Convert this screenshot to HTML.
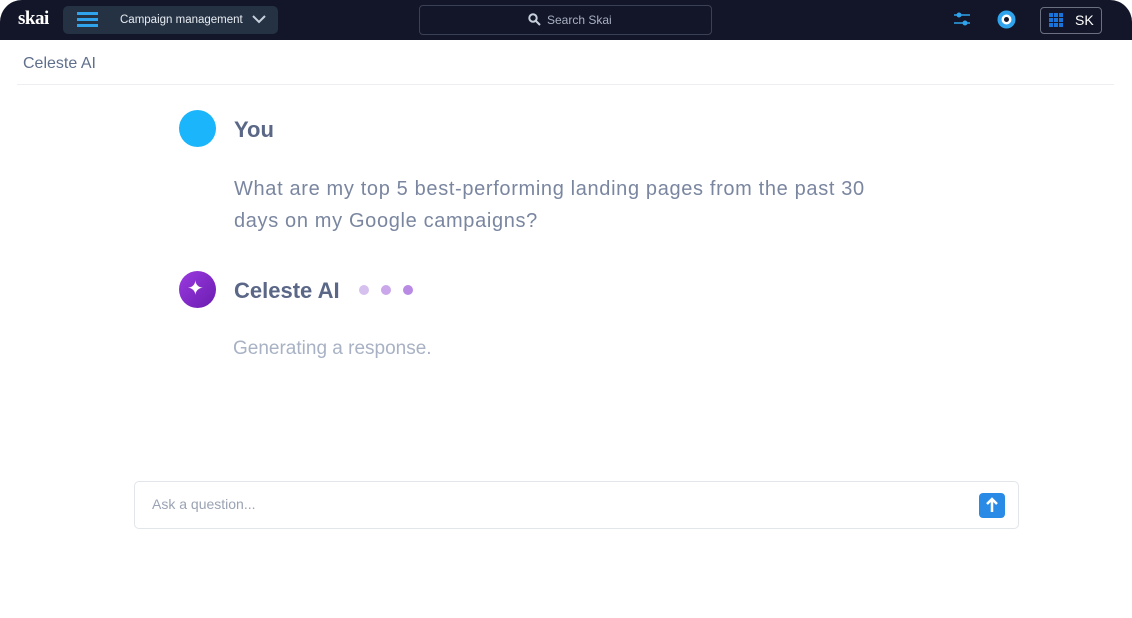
<!DOCTYPE html>
<html><head><meta charset="utf-8"><style>
body{margin:0;width:1132px;height:618px;background:#fff;font-family:"Liberation Sans",sans-serif;position:relative;overflow:hidden}
.top{position:absolute;left:0;top:0;width:1132px;height:40px;background:#131628;border-radius:22px 22px 0 0}
.abs{position:absolute}
</style></head><body>
<div class="top"></div>
<div class="abs" style="left:18px;top:8px;color:#fff;font-family:'Liberation Serif',serif;font-size:19px;font-weight:bold;letter-spacing:-0.5px">skai</div>
<div class="abs" style="left:63px;top:6px;width:215px;height:28px;background:#243243;border-radius:5px"></div>
<div class="abs" style="left:77px;top:12px;width:21px;height:3px;background:#2fa3ec;box-shadow:0 6px 0 #2fa3ec,0 12px 0 #2fa3ec"></div>
<div class="abs" style="left:120px;top:13px;color:#e8ecf2;font-size:11.5px;line-height:14px">Campaign management</div>
<svg class="abs" style="left:251px;top:13px" width="16" height="12"><path d="M2 3l6 6 6-6" stroke="#c8d0dc" stroke-width="2" fill="none"/></svg>
<div class="abs" style="left:419px;top:5px;width:291px;height:28px;border:1px solid #3a4156;border-radius:4px"></div>
<svg class="abs" style="left:528px;top:13px" width="13" height="13"><circle cx="5" cy="5" r="3.7" stroke="#c8d0dc" stroke-width="2" fill="none"/><path d="M8 8l4 4" stroke="#c8d0dc" stroke-width="2"/></svg>
<div class="abs" style="left:547px;top:13px;color:#a8b0c0;font-size:12px">Search Skai</div>
<svg class="abs" style="left:952px;top:11px" width="20" height="16"><path d="M2 4h16M2 12h16" stroke="#2fa3ec" stroke-width="1.5"/><circle cx="7" cy="4" r="2.5" fill="#2fa3ec"/><circle cx="13" cy="12" r="2.5" fill="#2fa3ec"/></svg>
<svg class="abs" style="left:997px;top:10px" width="19" height="19"><circle cx="9.5" cy="9.5" r="7" stroke="#2fa3ec" stroke-width="4" fill="#fff"/><circle cx="9.5" cy="9.5" r="2.5" fill="#131628"/></svg>
<div class="abs" style="left:1040px;top:7px;width:60px;height:25px;border:1px solid #6a7080;border-radius:4px"></div>
<div class="abs" style="left:1049px;top:13px;width:14px;height:14px;background:repeating-linear-gradient(90deg,#1a73d8 0 4px,transparent 4px 5px);-webkit-mask:repeating-linear-gradient(0deg,#000 0 4px,transparent 4px 5px)"></div>
<div class="abs" style="left:1075px;top:12px;color:#fff;font-size:14px">SK</div>
<div class="abs" style="left:23px;top:55px;color:#5f6f8c;font-size:16px">Celeste AI</div>
<div class="abs" style="left:17px;top:84px;width:1097px;height:1px;background:#eceef2"></div>
<div class="abs" style="left:179px;top:110px;width:37px;height:37px;border-radius:50%;background:#1ab5fb"></div>
<div class="abs" style="left:234px;top:117px;color:#5a6786;font-size:22px;font-weight:bold">You</div>
<div class="abs" style="left:234px;top:173px;width:665px;color:#7a86a0;font-size:20px;line-height:32px;letter-spacing:0.65px">What are my top 5 best-performing landing pages from the past 30 days on my Google campaigns?</div>
<div class="abs" style="left:179px;top:271px;width:37px;height:37px;border-radius:50%;background:linear-gradient(135deg,#9b3ae0,#6a1cb0)"></div>
<div class="abs" style="left:187px;top:276px;color:#fff;font-size:20px">✦</div>
<div class="abs" style="left:234px;top:278px;color:#5a6786;font-size:22px;font-weight:bold">Celeste AI</div>
<div class="abs" style="left:359px;top:285px;width:10px;height:10px;border-radius:50%;background:#d5c0ee"></div>
<div class="abs" style="left:381px;top:285px;width:10px;height:10px;border-radius:50%;background:#c9a7ea"></div>
<div class="abs" style="left:403px;top:285px;width:10px;height:10px;border-radius:50%;background:#b98ae4"></div>
<div class="abs" style="left:233px;top:338px;color:#a8b2c4;font-size:19px">Generating a response.</div>
<div class="abs" style="left:134px;top:481px;width:883px;height:46px;border:1px solid #e2e5ea;border-radius:5px"></div>
<div class="abs" style="left:152px;top:496px;color:#9aa3b3;font-size:14px">Ask a question...</div>
<div class="abs" style="left:979px;top:493px;width:26px;height:25px;background:#2a8be6;border-radius:4px"></div>
<svg class="abs" style="left:979px;top:493px" width="26" height="25"><path d="M13 19V7M8 11l5-5 5 5" stroke="#fff" stroke-width="2.5" fill="none"/></svg>
</body></html>
